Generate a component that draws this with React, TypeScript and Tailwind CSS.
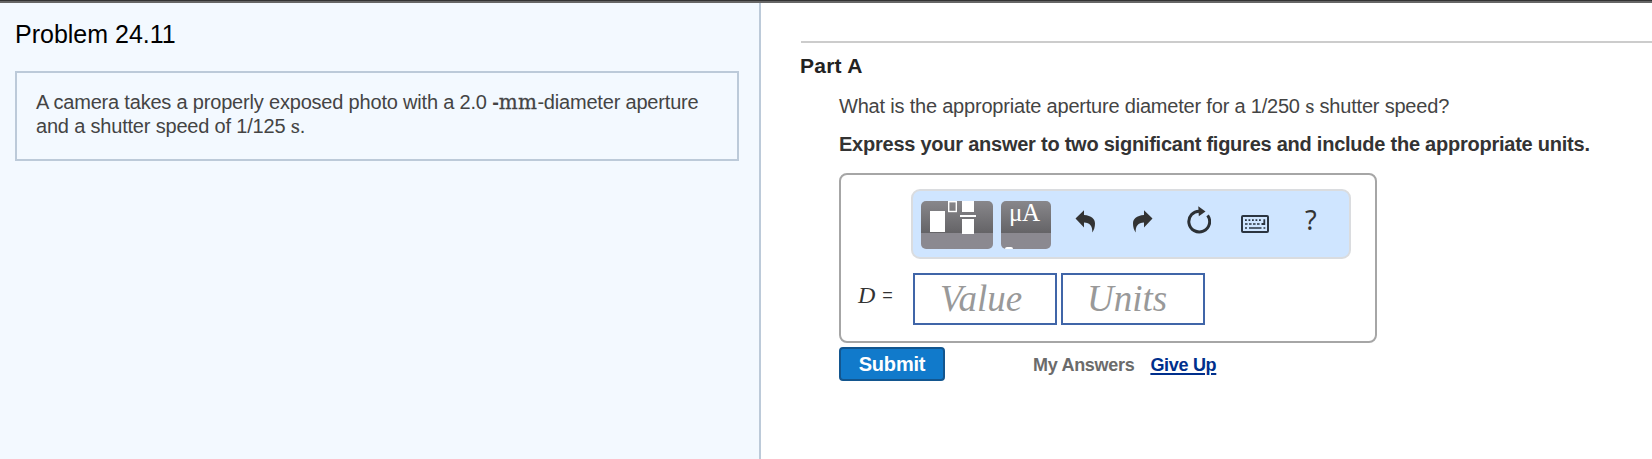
import type { ReactNode } from "react";

function UndoIcon() {
  return (
    <svg className="block h-[23px] w-[22px]" viewBox="0 0 22 23" fill="#333">
      <path d="M0.5 8.5 L9 0.3 V5 C16.5 5.5 20 9 20 13.5 C20 17 19 20 17.3 22.5 C17.6 16 15 12.8 9 12.5 V17.5 Z" />
    </svg>
  );
}

function RedoIcon() {
  return (
    <svg className="block h-[23px] w-[22px]" viewBox="0 0 22 23" fill="#333">
      <path d="M21.5 8.5 L13 0.3 V5 C5.5 5.5 2 9 2 13.5 C2 17 3 20 4.7 22.5 C4.4 16 7 12.8 13 12.5 V17.5 Z" />
    </svg>
  );
}

function ResetIcon() {
  return (
    <svg className="block h-7 w-6" viewBox="0 0 24 28">
      <path d="M13 5.2 A10.4 10.4 0 1 0 20.6 9.4" fill="none" stroke="#2b3035" strokeWidth="3" />
      <path d="M11.3 0.3 L18.5 5.6 L11.8 10.3 Z" fill="#333" />
    </svg>
  );
}

function KeyboardIcon() {
  return (
    <svg className="block h-[18px] w-7" viewBox="0 0 28 18" fill="none" stroke="#2b3440">
      <rect x="1" y="1" width="26" height="16" rx="1" strokeWidth="2" />
      <path d="M4 5.2H21" strokeWidth="1.7" strokeDasharray="1.8 1.7" />
      <path d="M4 9H20" strokeWidth="1.7" strokeDasharray="2.6 1.4" />
      <path d="M23.3 4.2V9H20.5" strokeWidth="1.8" />
      <path d="M4 13H6M8 13H20.5M22.5 13H24.3" strokeWidth="1.7" />
    </svg>
  );
}

function TemplateIcon() {
  return (
    <svg className="block h-12 w-[72px]" viewBox="0 0 72 48">
      <rect x="9" y="10" width="15" height="21" fill="#fff" />
      <rect x="27.7" y="0.7" width="7.6" height="9.8" fill="none" stroke="#fff" strokeWidth="1.4" />
      <rect x="41" y="0" width="12" height="11" fill="#fff" />
      <rect x="39" y="14" width="16" height="2" fill="#fff" />
      <rect x="41" y="18" width="12" height="15" fill="#fff" />
    </svg>
  );
}

// Units are set in a serif face inside the running text
function Unit({ children }: { children: ReactNode }) {
  return <span className="font-['DejaVu_Serif',serif] text-[18px] [-webkit-text-stroke:0.2px]">{children}</span>;
}

function ProblemPanel() {
  return (
    <section className="w-[761px] border-r-2 border-[#bccad9] bg-[#f3f9ff] pr-5 pl-[15px]">
      <h1 className="pt-[15px] text-[25px] leading-8 whitespace-nowrap text-black">Problem 24.11</h1>
      <div className="mt-[21px] h-[90px] border-2 border-[#bccad9] pt-[17px] pl-[19px] text-[20px] leading-6 tracking-[-0.19px] whitespace-nowrap text-[#444]">
        <p>
          A camera takes a properly exposed photo with a 2.0 <b>-</b>
          <span className="font-['DejaVu_Serif',serif] tracking-[0.4px] [-webkit-text-stroke:0.3px]">mm</span>-diameter
          aperture
        </p>
        <p>
          and a shutter speed of 1/125 <Unit>s</Unit>.
        </p>
      </div>
    </section>
  );
}

function Toolbar() {
  return (
    <div className="ml-[70px] flex h-[70px] w-[440px] rounded-[9px] border-2 border-[#dadcdf] bg-[#cfe5ff] pt-2.5 pl-2 text-[#333]">
      <button className="h-12 w-[72px] shrink-0 overflow-hidden rounded-[5px] bg-linear-to-b from-[#88878b] from-0% via-[#656467] via-66% to-[#8b8990] to-67%">
        <TemplateIcon />
      </button>
      <button className="ml-2 flex h-12 w-[50px] shrink-0 flex-col justify-between rounded-[5px] bg-linear-to-b from-[#88878b] from-0% via-[#656467] via-66% to-[#8b8990] to-67% pl-2 text-left font-['Liberation_Serif',serif] text-[25px] leading-[23px] tracking-[-0.5px] text-white">
        <span>μA</span>
        <span className="-ml-1 block h-0.5 w-2 rounded-t-full bg-white" />
      </button>
      <button className="mt-[6px] ml-[24px] h-7">
        <UndoIcon />
      </button>
      <button className="mt-[6px] ml-[34px] h-7">
        <RedoIcon />
      </button>
      <button className="mt-[5px] ml-[34px] h-7">
        <ResetIcon />
      </button>
      <button className="mt-[14px] ml-[30px] h-[18px]">
        <KeyboardIcon />
      </button>
      <button className="mt-[5px] ml-[36px] h-7 font-['Noto_Sans',sans-serif] text-[27px] leading-7">?</button>
    </div>
  );
}

function AnswerBox() {
  return (
    <div className="mt-[17px] -ml-px h-[170px] w-[538px] rounded-[8px] border-2 border-[#a6a6a6] pt-3.5">
      <Toolbar />
      <div className="mt-3.5 flex h-[52px] font-['Liberation_Serif',serif]">
        <label className="flex w-[72px] gap-[7px] pt-[6px] pl-[17px] text-[24px] leading-8 text-[#333]">
          <i>D</i>
          <span className="font-['Liberation_Sans',sans-serif] text-[18px] leading-[32px]">=</span>
        </label>
        <div className="w-36 border-2 border-[#4065a8] pl-[25px] text-[37px] leading-[47px] text-[#999] italic">Value</div>
        <div className="ml-1 w-36 border-2 border-[#4065a8] pl-[24px] text-[37px] leading-[47px] text-[#999] italic">Units</div>
      </div>
    </div>
  );
}

function PartPanel() {
  return (
    <section className="flex-1 pt-[38px] pl-10">
      <div className="border-t-2 border-[#ccc]" />
      <h2 className="mt-[11px] -ml-px text-[21px] leading-6 font-bold tracking-[0.25px] text-[#222]">Part A</h2>
      <div className="pl-[39px] whitespace-nowrap">
        <p className="mt-4 -ml-px text-[20px] leading-6 tracking-[-0.2px] text-[#444]">
          What is the appropriate aperture diameter for a 1/250 <Unit>s</Unit> shutter speed?
        </p>
        <p className="mt-[13px] -ml-px text-[20px] leading-6 font-bold tracking-[-0.24px] text-[#333]">
          Express your answer to two significant figures and include the appropriate units.
        </p>
        <AnswerBox />
        <div className="mt-1 -ml-px flex text-[18px] leading-[36px] font-bold tracking-[-0.3px]">
          <button className="h-[34px] w-[106px] rounded-[4px] border-2 border-[#13568f] bg-[#117acb] text-[20px] leading-[30px] tracking-[-0.2px] text-white">
            Submit
          </button>
          <span className="ml-[88px] text-[#6b6b6b]">My Answers</span>
          <a className="ml-4 text-[#002f8c] underline decoration-2 underline-offset-2" href="#">
            Give Up
          </a>
        </div>
      </div>
    </section>
  );
}

export default function App() {
  return (
    <div className="flex h-[459px] w-[1652px] flex-col overflow-hidden bg-white font-['Liberation_Sans',Arial,sans-serif]">
      <div className="h-[3px] shrink-0 border-t border-[#333] bg-[#666]" />
      <main className="flex flex-1">
        <ProblemPanel />
        <PartPanel />
      </main>
    </div>
  );
}
